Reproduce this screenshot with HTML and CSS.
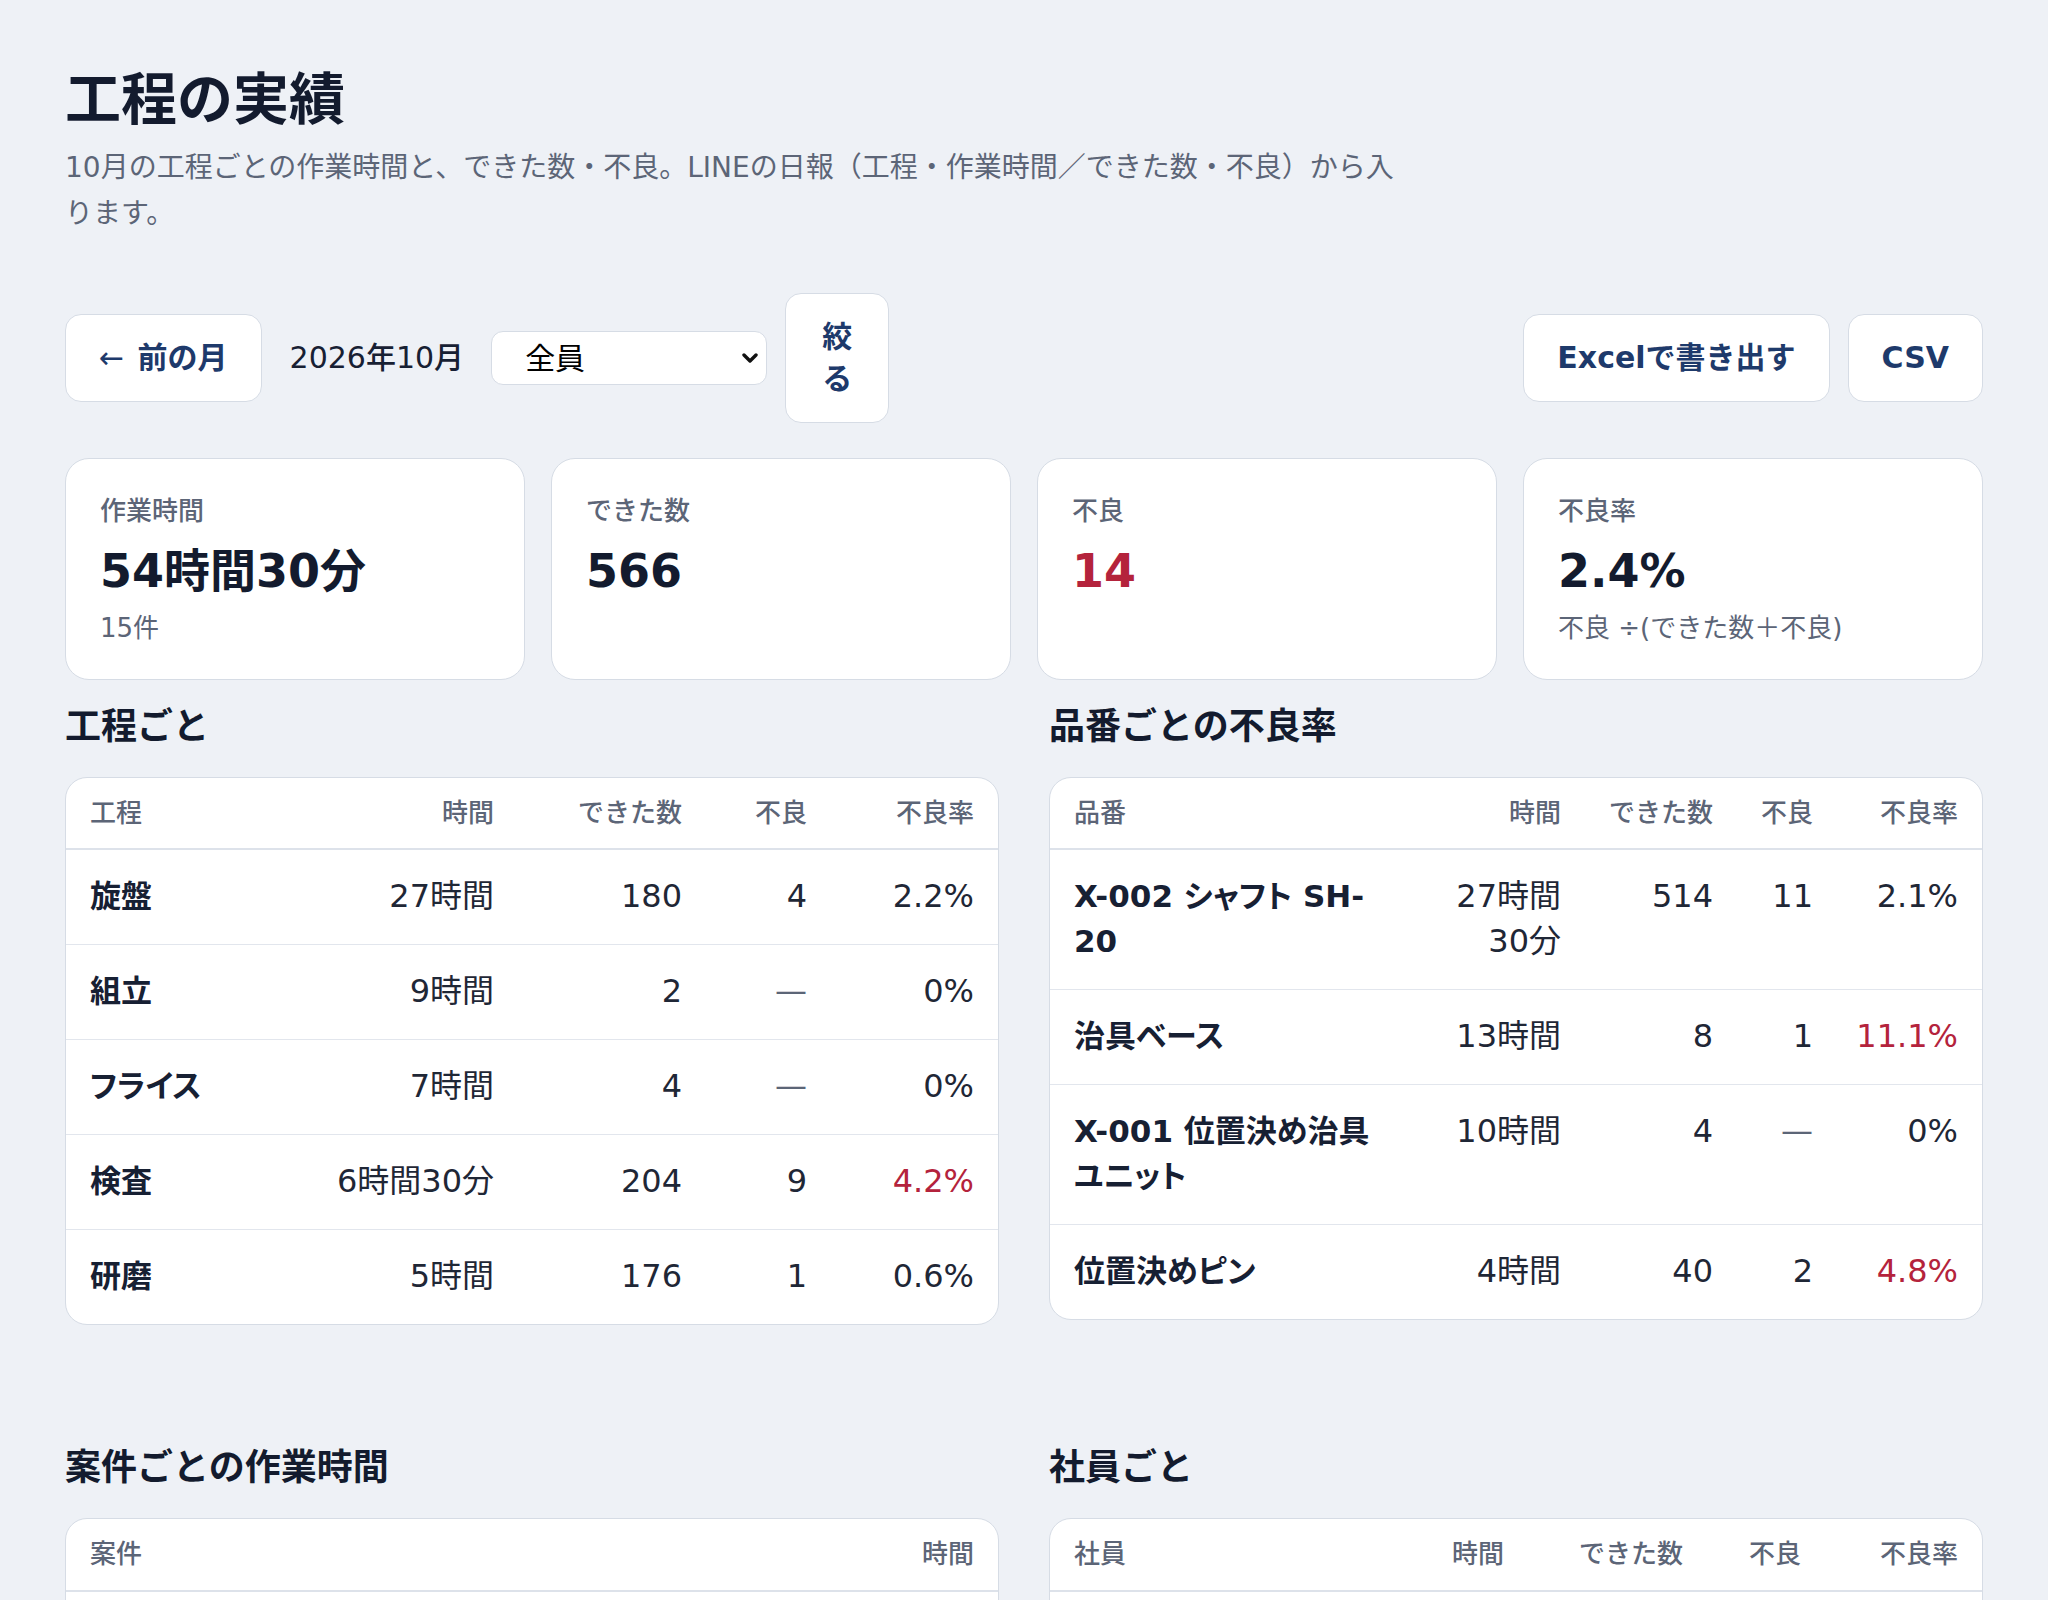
FILE: index.html
```html
<!DOCTYPE html>
<html lang="ja">
<head>
    <meta charset="UTF-8">
    <meta name="viewport" content="width=device-width, initial-scale=1.0">
    <title>工程の実績</title>
    <link rel="stylesheet" href="styles.css">
</head>
<body>
    <main class="page">
        <header class="page-head">
            <h1>工程の実績</h1>
            <p class="lead">10月の工程ごとの作業時間と、できた数・不良。LINEの日報（工程・作業時間／できた数・不良）から入ります。</p>
        </header>

        <div class="toolbar">
            <div class="toolbar-group">
                <button class="btn"><span class="arrow">←</span> 前の月</button>
                <span class="month">2026年10月</span>
                <span class="select-wrap">
                    <select class="member-select">
                        <option>全員</option>
                        <option>佐藤</option>
                        <option>鈴木</option>
                    </select>
                    <svg class="select-arrow" width="16" height="10" viewBox="0 0 16 10">
                        <path d="M2 2 L8 8 L14 2" fill="none" stroke="#111" stroke-width="3.4" stroke-linecap="round" stroke-linejoin="round"/>
                    </svg>
                </span>
                <button class="btn btn-narrow">絞る</button>
            </div>
            <div class="toolbar-group">
                <button class="btn">Excelで書き出す</button>
                <button class="btn">CSV</button>
            </div>
        </div>

        <div class="stats">
            <div class="stat">
                <div class="stat-label">作業時間</div>
                <div class="stat-value">54時間30分</div>
                <div class="stat-sub">15件</div>
            </div>
            <div class="stat">
                <div class="stat-label">できた数</div>
                <div class="stat-value">566</div>
            </div>
            <div class="stat">
                <div class="stat-label">不良</div>
                <div class="stat-value bad">14</div>
            </div>
            <div class="stat">
                <div class="stat-label">不良率</div>
                <div class="stat-value">2.4%</div>
                <div class="stat-sub">不良 ÷(できた数＋不良)</div>
            </div>
        </div>

        <div class="sections">
            <section>
                <h2>工程ごと</h2>
                <div class="table-card">
                    <table class="process-table">
                        <thead>
                            <tr>
                                <th class="name">工程</th>
                                <th class="col-time">時間</th>
                                <th class="col-count">できた数</th>
                                <th class="col-bad">不良</th>
                                <th class="col-rate">不良率</th>
                            </tr>
                        </thead>
                        <tbody>
                            <tr><td class="name">旋盤</td><td>27時間</td><td>180</td><td>4</td><td>2.2%</td></tr>
                            <tr><td class="name">組立</td><td>9時間</td><td>2</td><td class="none">—</td><td>0%</td></tr>
                            <tr><td class="name">フライス</td><td>7時間</td><td>4</td><td class="none">—</td><td>0%</td></tr>
                            <tr><td class="name">検査</td><td>6時間30分</td><td>204</td><td>9</td><td class="bad">4.2%</td></tr>
                            <tr><td class="name">研磨</td><td>5時間</td><td>176</td><td>1</td><td>0.6%</td></tr>
                        </tbody>
                    </table>
                </div>
            </section>

            <section>
                <h2>品番ごとの不良率</h2>
                <div class="table-card">
                    <table class="part-table">
                        <thead>
                            <tr>
                                <th class="name">品番</th>
                                <th class="col-time">時間</th>
                                <th class="col-count">できた数</th>
                                <th class="col-bad">不良</th>
                                <th class="col-rate">不良率</th>
                            </tr>
                        </thead>
                        <tbody>
                            <tr><td class="name">X-002 シャフト SH-20</td><td>27時間30分</td><td>514</td><td>11</td><td>2.1%</td></tr>
                            <tr><td class="name">治具ベース</td><td>13時間</td><td>8</td><td>1</td><td class="bad">11.1%</td></tr>
                            <tr><td class="name">X-001 位置決め治具ユニット</td><td>10時間</td><td>4</td><td class="none">—</td><td>0%</td></tr>
                            <tr><td class="name">位置決めピン</td><td>4時間</td><td>40</td><td>2</td><td class="bad">4.8%</td></tr>
                        </tbody>
                    </table>
                </div>
            </section>

            <section>
                <h2>案件ごとの作業時間</h2>
                <div class="table-card">
                    <table class="job-table">
                        <thead>
                            <tr>
                                <th class="name">案件</th>
                                <th class="col-time">時間</th>
                            </tr>
                        </thead>
                        <tbody>
                            <tr><td class="name">シャフト量産</td><td>27時間30分</td></tr>
                            <tr><td class="name">治具製作</td><td>23時間</td></tr>
                        </tbody>
                    </table>
                </div>
            </section>

            <section>
                <h2>社員ごと</h2>
                <div class="table-card">
                    <table class="member-table">
                        <thead>
                            <tr>
                                <th class="name">社員</th>
                                <th class="col-time">時間</th>
                                <th class="col-count">できた数</th>
                                <th class="col-bad">不良</th>
                                <th class="col-rate">不良率</th>
                            </tr>
                        </thead>
                        <tbody>
                            <tr><td class="name">佐藤</td><td>30時間</td><td>320</td><td>8</td><td>2.4%</td></tr>
                            <tr><td class="name">鈴木</td><td>24時間30分</td><td>246</td><td>6</td><td>2.4%</td></tr>
                        </tbody>
                    </table>
                </div>
            </section>
        </div>
    </main>
</body>
</html>
```

FILE: styles.css
```css
* {
    box-sizing: border-box;
}

body {
    margin: 0;
    background-color: #eef1f6;
    color: #172033;
    font-family: "DejaVu Sans", "Noto Sans CJK JP", sans-serif;
    font-size: 32px;
    line-height: 1.4;
}

.page {
    padding: 64px 65px;
}

h1 {
    margin: 0;
    font-size: 56px;
    line-height: 1.3;
    font-weight: 700;
    color: #131b2e;
}

.lead {
    margin: 8px 0 0;
    max-width: 1344px;
    font-size: 28px;
    line-height: 1.65;
    color: #5c6577;
}

.toolbar {
    display: flex;
    justify-content: space-between;
    align-items: center;
    margin-top: 56px;
}

.toolbar-group {
    display: flex;
    align-items: center;
    gap: 18px;
}

.btn {
    font-family: inherit;
    font-size: 30px;
    line-height: 1.4;
    font-weight: 600;
    color: #1e3a6b;
    background-color: #fff;
    border: 1px solid #d6dce5;
    border-radius: 16px;
    padding: 22px 33px;
    cursor: pointer;
}

.btn .arrow {
    font-weight: 400;
    margin-right: 3px;
}

.btn-narrow {
    width: min-content;
    padding-left: 36px;
    padding-right: 36px;
}

.month {
    margin: 0 9px 0 10px;
    font-size: 30px;
    font-weight: 500;
    color: #172033;
}

.select-wrap {
    position: relative;
    display: inline-flex;
}

.member-select {
    appearance: none;
    width: 276px;
    height: 54px;
    font-family: inherit;
    font-size: 30px;
    padding: 0 36px 0 33px;
    border: 1px solid #d6dce5;
    border-radius: 12px;
    background-color: #fff;
    color: #000;
}

.select-arrow {
    position: absolute;
    right: 9px;
    top: 50%;
    transform: translateY(-50%);
    pointer-events: none;
}

.stats {
    display: grid;
    grid-template-columns: repeat(4, 1fr);
    gap: 26px;
    margin-top: 35px;
}

.stat {
    background-color: #fff;
    border: 1px solid #d6dce5;
    border-radius: 24px;
    padding: 34px 34px 33px;
    min-height: 222px;
}

.stat-label {
    font-size: 26px;
    line-height: 1.4;
    font-weight: 500;
    color: #5c6577;
}

.stat-value {
    margin-top: 14px;
    font-size: 46px;
    line-height: 1.2;
    font-weight: 700;
    color: #131b2e;
}

.stat-sub {
    margin-top: 11px;
    font-size: 26px;
    line-height: 1.4;
    color: #5c6577;
}

.bad {
    color: #b4233c;
}

.sections {
    display: grid;
    grid-template-columns: 1fr 1fr;
    column-gap: 50px;
    row-gap: 120px;
    margin-top: 24px;
}

h2 {
    margin: 0 0 26px;
    font-size: 36px;
    line-height: 1.3;
    font-weight: 700;
    color: #131b2e;
}

.table-card {
    background-color: #fff;
    border: 1px solid #d6dce5;
    border-radius: 22px;
    overflow: hidden;
}

table {
    width: 100%;
    border-collapse: collapse;
    table-layout: fixed;
}

th {
    padding: 17px 12px;
    font-size: 26px;
    line-height: 1.4;
    font-weight: 500;
    color: #5c6577;
    text-align: right;
    border-bottom: 2px solid #dde2ea;
}

td {
    padding: 24px 12px 25px;
    line-height: 45px;
    text-align: right;
    vertical-align: top;
    color: #1f2736;
}

th:first-child,
td:first-child {
    padding-left: 24px;
}

th:last-child,
td:last-child {
    padding-right: 24px;
}

tbody tr + tr td {
    border-top: 1px solid #e2e6ed;
}

th.name,
td.name {
    text-align: left;
    padding-right: 24px;
}

td.name {
    font-size: 31px;
    font-weight: 700;
    font-feature-settings: "palt";
    color: #172033;
}

td.none {
    color: #5c6577;
}

td.bad {
    color: #b4233c;
}

.process-table .col-time { width: 200px; }
.process-table .col-count { width: 188px; }
.process-table .col-bad { width: 125px; }
.process-table .col-rate { width: 179px; }

.part-table .col-time { width: 165px; }
.part-table .col-count { width: 152px; }
.part-table .col-bad { width: 100px; }
.part-table .col-rate { width: 157px; }

.job-table .col-time { width: 220px; }

.member-table .col-time { width: 150px; }
.member-table .col-count { width: 179px; }
.member-table .col-bad { width: 118px; }
.member-table .col-rate { width: 169px; }
```
